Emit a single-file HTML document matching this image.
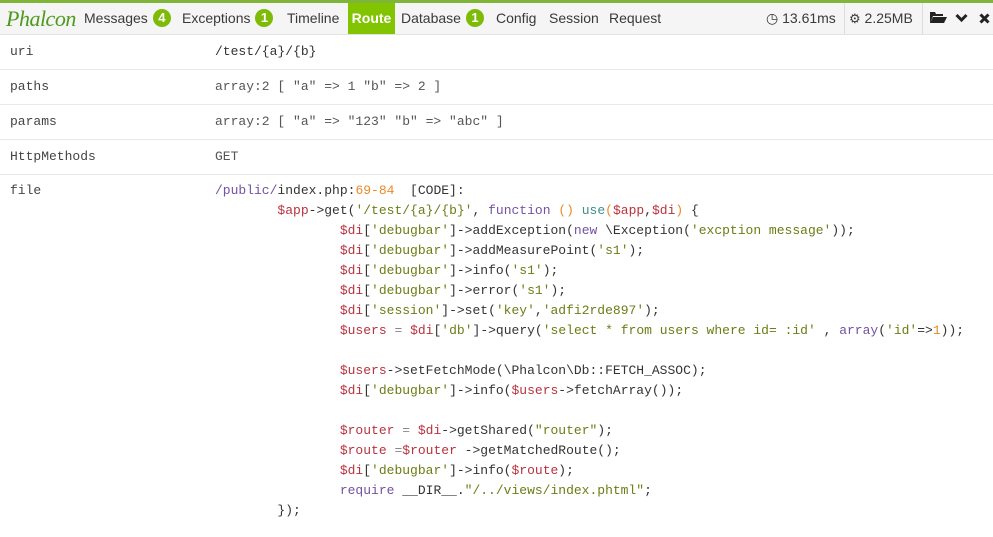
<!DOCTYPE html>
<html><head><meta charset="utf-8"><style>
*{margin:0;padding:0;box-sizing:border-box}
body{width:993px;height:537px;overflow:hidden;background:#fff;font-family:"Liberation Sans",sans-serif;position:relative}
#top{position:absolute;left:0;top:0;width:993px;height:3px;background:#7fb539}
#hdr{position:absolute;left:0;top:3px;width:993px;height:32px;background:#f5f5f5;border-bottom:1px solid #e3e3e3}
.n{position:absolute;top:0;height:31px;line-height:31px;font-size:14px;color:#3a3a3a}
.b{display:inline-block;background:#7dbb06;color:#fff;font-weight:bold;font-size:13px;width:18px;height:18px;line-height:18px;border-radius:9px;text-align:center;margin-left:5px;vertical-align:1px}
.sep{position:absolute;top:0;width:1px;height:31px;background:#ddd}
.row{position:absolute;left:0;width:993px;border-bottom:1px solid #e8e8e8;font-family:"Liberation Mono",monospace;font-size:13px;color:#444}
.k{position:absolute;left:10px}
.v{position:absolute;left:215px}
pre{font-family:"Liberation Mono",monospace;font-size:13px;line-height:20px;color:#333;position:absolute;left:215px;top:181px}
.r{color:#b8323e}.s{color:#6b7d14}.p{color:#7451a1}.o{color:#e8892b}.t{color:#3f8d8d}.g{color:#888}
</style></head><body>
<div id="top"></div>
<div id="hdr">
<div class="n" style="left:6px;font-family:'Liberation Serif',serif;font-style:italic;font-size:22px;color:#4e9a1f;letter-spacing:-0.5px">Phalcon</div>
<div class="n" style="left:84px">Messages<span class="b">4</span></div>
<div class="n" style="left:182px">Exceptions<span class="b">1</span></div>
<div class="n" style="left:287px">Timeline</div>
<div class="n" style="left:348px;width:47px;background:#82c400;color:#fff;font-weight:bold;text-align:center">Route</div>
<div class="n" style="left:401px">Database<span class="b">1</span></div>
<div class="n" style="left:496px">Config</div>
<div class="n" style="left:549px">Session</div>
<div class="n" style="left:609px">Request</div>
<div class="n" style="left:766px">◷ 13.61ms</div>
<div class="sep" style="left:844px"></div>
<div class="n" style="left:849px"><span style="font-size:13px">⚙</span> 2.25MB</div>
<div class="sep" style="left:922px"></div>
<div class="n" style="left:930px;color:#222;font-size:14px">
<svg width="17" height="13" viewBox="0 0 17 13" style="vertical-align:-1px"><path d="M0 1h5l1 2h7v2H3L0 12z M3 6h14l-3 6H0z" fill="#222"/></svg>
<svg width="13" height="10" viewBox="0 0 13 10" style="margin-left:4px;vertical-align:0"><path d="M1.5 2l5 5 5-5" stroke="#222" stroke-width="3" fill="none"/></svg>
<svg width="11" height="11" viewBox="0 0 11 11" style="margin-left:7px;vertical-align:-1px"><path d="M1.5 1.5l8 8M9.5 1.5l-8 8" stroke="#222" stroke-width="3"/></svg>
</div>
</div>
<div class="row" style="top:35px;height:35px"><span class="k" style="top:9px">uri</span><span class="v" style="top:9px;color:#333">/test/{a}/{b}</span></div>
<div class="row" style="top:70px;height:35px"><span class="k" style="top:9px">paths</span><span class="v" style="top:9px;color:#555">array:2 [ "a" => 1 "b" => 2 ]</span></div>
<div class="row" style="top:105px;height:35px"><span class="k" style="top:9px">params</span><span class="v" style="top:9px;color:#555">array:2 [ "a" => "123" "b" => "abc" ]</span></div>
<div class="row" style="top:140px;height:35px"><span class="k" style="top:9px">HttpMethods</span><span class="v" style="top:9px;color:#555">GET</span></div>
<div class="row" style="top:175px;height:362px;border:none"><span class="k" style="top:8px">file</span></div>
<pre><span class="p">/public/</span>index.php:<span class="o">69-84</span>  [CODE]:
        <span class="r">$app</span>-&gt;get(<span class="s">'/test/{a}/{b}'</span>, <span class="p">function</span> <span class="o">()</span> <span class="t">use</span><span class="o">(</span><span class="r">$app</span>,<span class="r">$di</span><span class="o">)</span> {
                <span class="r">$di</span>[<span class="s">'debugbar'</span>]-&gt;addException(<span class="p">new</span> \Exception(<span class="s">'excption message'</span>));
                <span class="r">$di</span>[<span class="s">'debugbar'</span>]-&gt;addMeasurePoint(<span class="s">'s1'</span>);
                <span class="r">$di</span>[<span class="s">'debugbar'</span>]-&gt;info(<span class="s">'s1'</span>);
                <span class="r">$di</span>[<span class="s">'debugbar'</span>]-&gt;error(<span class="s">'s1'</span>);
                <span class="r">$di</span>[<span class="s">'session'</span>]-&gt;set(<span class="s">'key'</span>,<span class="s">'adfi2rde897'</span>);
                <span class="r">$users</span> <span class="g">=</span> <span class="r">$di</span>[<span class="s">'db'</span>]-&gt;query(<span class="s">'select * from users where id= :id'</span> , <span class="p">array</span>(<span class="s">'id'</span>=&gt;<span class="o">1</span>));

                <span class="r">$users</span>-&gt;setFetchMode(\Phalcon\Db::FETCH_ASSOC);
                <span class="r">$di</span>[<span class="s">'debugbar'</span>]-&gt;info(<span class="r">$users</span>-&gt;fetchArray());

                <span class="r">$router</span> <span class="g">=</span> <span class="r">$di</span>-&gt;getShared(<span class="s">"router"</span>);
                <span class="r">$route</span> <span class="g">=</span><span class="r">$router</span> -&gt;getMatchedRoute();
                <span class="r">$di</span>[<span class="s">'debugbar'</span>]-&gt;info(<span class="r">$route</span>);
                <span class="p">require</span> __DIR__.<span class="s">"/../views/index.phtml"</span>;
        });</pre>
</body></html>
